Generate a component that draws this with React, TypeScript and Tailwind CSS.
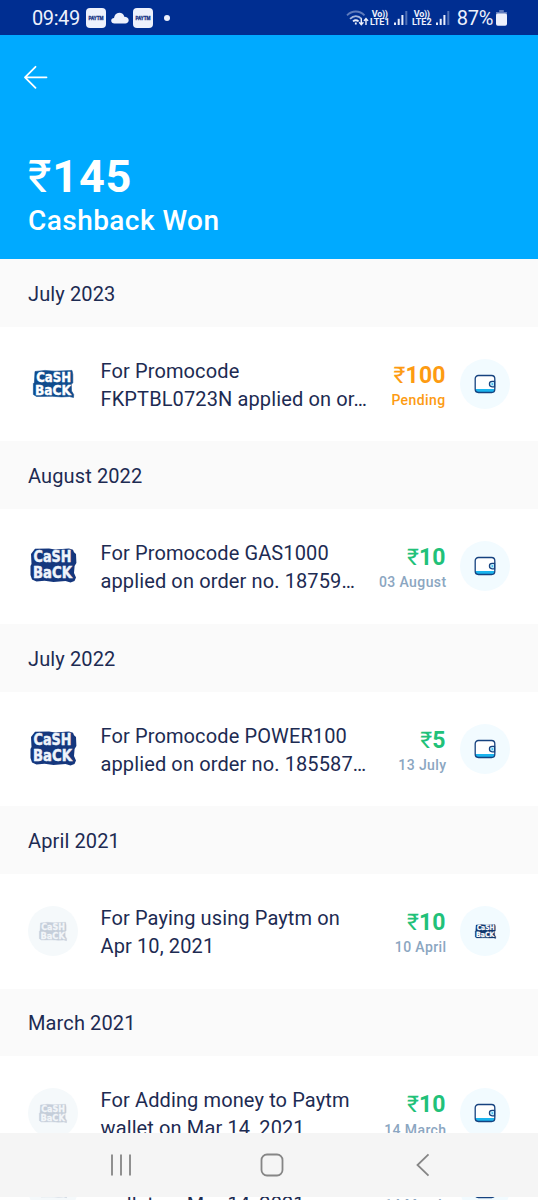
type IconKind = "wallet" | "cashback";
type LogoKind = "flat" | "bold" | "muted";

interface Transaction {
  month: string;
  lines: [string, string];
  amount: string;
  note: string;
  pending?: boolean;
  logo: LogoKind;
  icon: IconKind;
}

const transactions: Transaction[] = [
  {
    month: "July 2023",
    lines: ["For Promocode", "FKPTBL0723N applied on or…"],
    amount: "100",
    note: "Pending",
    pending: true,
    logo: "flat",
    icon: "wallet",
  },
  {
    month: "August 2022",
    lines: ["For Promocode GAS1000", "applied on order no. 18759…"],
    amount: "10",
    note: "03 August",
    logo: "bold",
    icon: "wallet",
  },
  {
    month: "July 2022",
    lines: ["For Promocode POWER100", "applied on order no. 185587…"],
    amount: "5",
    note: "13 July",
    logo: "bold",
    icon: "wallet",
  },
  {
    month: "April 2021",
    lines: ["For Paying using Paytm on", "Apr 10, 2021"],
    amount: "10",
    note: "10 April",
    logo: "muted",
    icon: "cashback",
  },
  {
    month: "March 2021",
    lines: ["For Adding money to Paytm", "wallet on Mar 14, 2021"],
    amount: "10",
    note: "14 March",
    logo: "muted",
    icon: "wallet",
  },
];

function CashbackLogo({
  className,
  shade,
  fill = "#ffffff",
}: {
  className: string;
  shade: string;
  fill?: string;
}) {
  return (
    <svg
      viewBox="0 0 41 28"
      className={`overflow-visible font-['DejaVu_Sans',sans-serif] text-[14px] font-bold ${className}`}
    >
      <path
        d="M2 1.500 12 .4l10 .8L39 .4l.8 4v8.600l-1.500 1 .2 7 2.200 3.500-.2 3-4-1-8 .4-9-.6-16 .2L.4 24.500v-11l1-1z"
        fill={shade}
        stroke={shade}
        strokeWidth=".6"
        strokeLinejoin="round"
      />
      <g fill={fill} stroke={fill} strokeWidth=".4">
        <text x="3.200" y="12" textLength="35" lengthAdjust="spacingAndGlyphs">
          CaSH
        </text>
        <text x="2" y="24.500" textLength="36" lengthAdjust="spacingAndGlyphs">
          BaCK
        </text>
      </g>
    </svg>
  );
}

function BoldCashbackLogo() {
  return (
    <svg
      viewBox="0 0 48 36"
      className="h-9 w-12 overflow-visible font-['DejaVu_Sans',sans-serif] text-[16px] font-bold"
    >
      <path
        d="M6 .8 20 .6l6 .8L40 .4l4 1.400 1 2.500L47 6l.4 9-1.800 3-.6 7 2 4.500-1.500 3.500-4 1.500-5-1.600-12 1.200-9-1.300-8 .6-4.500-2L1.500 27V18l1-2-.5-10z"
        fill="#15377d"
      />
      <g fill="#eff4fb" stroke="#eff4fb" strokeWidth=".5">
        <text x="4.500" y="14.300" textLength="38" lengthAdjust="spacingAndGlyphs">
          CaSH
        </text>
        <text x="4" y="29.800" textLength="39" lengthAdjust="spacingAndGlyphs">
          BaCK
        </text>
      </g>
    </svg>
  );
}

function WalletIcon() {
  return (
    <svg viewBox="0 0 22 20" className="h-5 w-[22px]" fill="none">
      <rect x="1.200" y="1.500" width="19.600" height="17" rx="3.200" fill="#fff" />
      <path d="M1.300 15h19.400v.4a3.200 3.200 0 0 1-3.200 3.200h-13a3.200 3.200 0 0 1-3.200-3.200z" fill="#1bb4ee" />
      <rect x="1.200" y="1.500" width="19.600" height="17" rx="3.200" stroke="#16427f" strokeWidth="1.300" />
      <path d="M20.600 7.400h-2.500a2.700 2.700 0 0 0 0 5.400h2.500z" fill="#b9e8fb" stroke="#16427f" strokeWidth="1.200" />
      <circle cx="18.300" cy="10.100" r=".8" fill="#1bb4ee" />
    </svg>
  );
}

function LeadingLogo({ kind }: { kind: LogoKind }) {
  if (kind === "muted") {
    return (
      <div className="flex size-[50px] items-center justify-center rounded-full bg-[#f5f9fb]">
        <CashbackLogo className="h-[19px] w-7" shade="#c5ceda" fill="#f3f6f9" />
      </div>
    );
  }
  return (
    <div className="flex size-[50px] items-center justify-center">
      {kind === "flat" ? (
        <CashbackLogo className="h-7 w-[41px]" shade="#104c8d" />
      ) : (
        <BoldCashbackLogo />
      )}
    </div>
  );
}

function TransactionRow({ item }: { item: Transaction }) {
  return (
    <div className="flex h-[114.6px] items-start bg-white px-7 pt-[30.1px]">
      <div className="mt-[2px] shrink-0">
        <LeadingLogo kind={item.logo} />
      </div>
      <div className="ml-[22.5px] flex-1 whitespace-nowrap text-[20px] leading-7 tracking-[0.12px] text-[#1d2b52]">
        <p>{item.lines[0]}</p>
        <p>{item.lines[1]}</p>
      </div>
      <div className="flex flex-col items-end whitespace-nowrap pt-[4px]">
        <p
          className={`pr-[1px] text-[23px] font-bold leading-[30px] tracking-[0.1px] ${
            item.pending ? "text-[#fd9b12]" : "text-[#21c179]"
          }`}
        >
          <span className="font-normal">₹</span>
          {item.amount}
        </p>
        <p
          className={`-mt-[0.8px] text-[14px] font-medium leading-5 tracking-[0.4px] ${
            item.pending ? "pr-[1px] text-[#fd9b12]" : "text-[#8ba6c1]"
          }`}
        >
          {item.note}
        </p>
      </div>
      <div className="ml-[13.5px] mt-[2px] flex size-[50px] shrink-0 items-center justify-center rounded-full bg-[#f2fbff]">
        {item.icon === "wallet" ? (
          <WalletIcon />
        ) : (
          <CashbackLogo className="h-[15px] w-[21px]" shade="#12386f" />
        )}
      </div>
    </div>
  );
}

function PaytmBadge() {
  return (
    <div className="flex size-5 items-center justify-center rounded-[4px] bg-[#edf1fc]">
      <svg viewBox="0 0 16 6" className="h-1.5 w-4 overflow-visible font-['Roboto',sans-serif] text-[6px] font-black">
        <text x="0.5" y="5" textLength="15" lengthAdjust="spacingAndGlyphs" fill="#243b89" stroke="#243b89" strokeWidth=".3">
          PAYTM
        </text>
      </svg>
    </div>
  );
}

function Signal() {
  return (
    <svg viewBox="0 0 14 16" className="h-4 w-3.5" fill="#e9eefc">
      <rect x="0" y="12.5" width="2" height="2.5" />
      <rect x="3.7" y="8.8" width="2" height="6.2" />
      <rect x="7.4" y="5" width="2" height="10" />
      <rect x="11.3" y="1" width="2" height="14" opacity=".35" />
    </svg>
  );
}

function Volte({ sim }: { sim: string }) {
  return (
    <div className="flex w-5 flex-col items-center whitespace-nowrap text-[9px] font-bold leading-[8px]">
      <span className="tracking-[-0.3px]">Vo))</span>
      <span>LTE{sim}</span>
    </div>
  );
}

function StatusBar() {
  return (
    <div className="flex h-[35px] shrink-0 items-center justify-between bg-[#002e91] pl-8 pr-[31px] text-[#edf1fc]">
      <div className="flex items-center">
        <span className="w-[54px] text-[20px] leading-6 tracking-[-0.4px]">09:49</span>
        <PaytmBadge />
        <svg viewBox="0 0 18 12" className="ml-[4.5px] h-3 w-[18px]" fill="currentColor">
          <path d="M3.5 11.4C1.4 11.4.2 10.2.2 8.7c0-1.6 1.3-2.6 2.8-2.6C3.400 3 5.300.8 8.200.8c2.700 0 4.600 1.500 5.100 4 2.600.2 4.400 1.400 4.400 3.500 0 1.900-1.500 3.100-3.500 3.100z" />
        </svg>
        <div className="ml-1">
          <PaytmBadge />
        </div>
        <span className="ml-[11.5px] size-1.5 rounded-full bg-current" />
      </div>
      <div className="flex items-center">
        <svg viewBox="0 0 23 18" className="h-[18px] w-[23px]" fill="none" strokeWidth="1.8" stroke="currentColor">
          <path d="M1 6.400c5-5.200 12.500-5.200 17.500 0" opacity=".4" />
          <path d="M4 9.800c3.500-3.400 8.200-3.400 11.700 0" opacity=".7" />
          <path d="M7 12.400c1.800-1.500 3.800-1.500 5.600 0" />
          <path d="M9.800 13.500v2" />
          <path d="M15.300 9.500v6M13.200 13.300l2.100 2.300 2.100-2.300M20 16V9.500M17.900 11.900 20 9.600l2.100 2.300" strokeWidth="1.4" />
        </svg>
        <div className="ml-[1px]">
          <Volte sim="1" />
        </div>
        <div className="ml-1">
          <Signal />
        </div>
        <div className="ml-[4px]">
          <Volte sim="2" />
        </div>
        <div className="ml-1">
          <Signal />
        </div>
        <span className="ml-[7px] text-[20px] leading-6 tracking-[-0.3px]">87%</span>
        <svg viewBox="0 0 11 16" className="ml-[3px] h-4 w-[11px]" fill="currentColor">
          <path d="M3.200 0h4.600v2H11v4H0V2h3.200z" opacity=".4" />
          <rect y="3.500" width="11" height="12.200" rx="1.800" />
        </svg>
      </div>
    </div>
  );
}

function NavigationBar() {
  return (
    <nav className="flex h-16 shrink-0 items-center bg-[#f5f5f5] pb-[1px] pl-[110px] text-[#868686]">
      <svg viewBox="0 0 22 22" className="size-[22px]" stroke="currentColor" strokeWidth="1.8">
        <path d="M2 .5v21M11 .5v21M20 .5v21" />
      </svg>
      <svg viewBox="0 0 24 24" className="ml-[127.5px] size-6" fill="none" stroke="currentColor" strokeWidth="1.8">
        <rect x="1.500" y="1.500" width="21" height="21" rx="5.500" />
      </svg>
      <svg viewBox="0 0 14 24" className="ml-[132.5px] h-6 w-3.5" fill="none" stroke="currentColor" strokeWidth="1.8">
        <path d="M12.500 1.300 1.500 12l11 10.700" />
      </svg>
    </nav>
  );
}

export default function App() {
  const last = transactions[transactions.length - 1];

  return (
    <div className="flex h-[1200px] w-[538px] flex-col overflow-hidden bg-white font-['Roboto',sans-serif]">
      <StatusBar />
      <header className="h-[224px] shrink-0 bg-[#00aaff] px-7 text-white">
        <button className="mt-[30px] block h-6">
          <svg viewBox="0 0 24 24" className="-ml-1 size-6" fill="none" stroke="currentColor" strokeWidth="1.8" strokeLinecap="round" strokeLinejoin="round">
            <path d="M22.500 12.300H1.200M11.500 1.800 1 12.300l10.500 10.500" />
          </svg>
        </button>
        <h1 className="mt-[61px] text-[45px] font-bold leading-[54px] tracking-[0.9px]">
          <span className="font-normal">₹</span>145
        </h1>
        <p className="mt-[1px] text-[28px] font-medium leading-8 tracking-[0.45px]">Cashback Won</p>
      </header>
      <main className="h-[874px] shrink-0 overflow-hidden">
        {transactions.map((item) => (
          <section key={item.month}>
            <h2 className="flex h-[67.8px] items-center bg-[#fafafa] px-7 pt-[2px] text-[20px] tracking-[0.12px] text-[#1d2b52]">
              {item.month}
            </h2>
            <TransactionRow item={item} />
          </section>
        ))}
      </main>
      <NavigationBar />
      {/* list content visible under the navigation bar */}
      <div className="h-[3px] shrink-0 overflow-hidden">
        <div className="-mt-[65.4px]">
          <TransactionRow item={last} />
        </div>
      </div>
    </div>
  );
}
